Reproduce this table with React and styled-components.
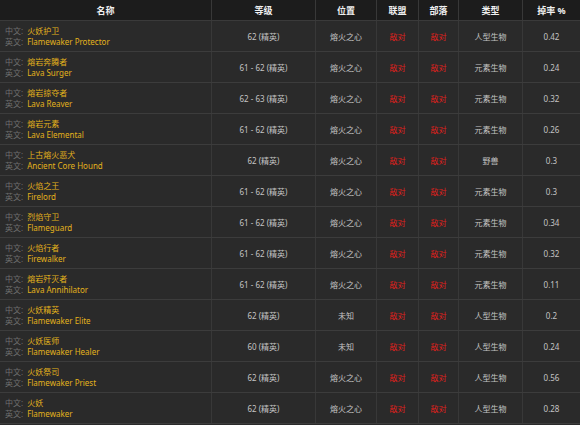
import React from 'react'
import styled, { createGlobalStyle } from 'styled-components'

const rows = [
  ['火妖护卫', 'Flamewaker Protector', '62 (精英)', '熔火之心', '人型生物', '0.42'],
  ['熔岩奔腾者', 'Lava Surger', '61 - 62 (精英)', '熔火之心', '元素生物', '0.24'],
  ['熔岩掠夺者', 'Lava Reaver', '62 - 63 (精英)', '熔火之心', '元素生物', '0.32'],
  ['熔岩元素', 'Lava Elemental', '61 - 62 (精英)', '熔火之心', '元素生物', '0.26'],
  ['上古熔火恶犬', 'Ancient Core Hound', '62 (精英)', '熔火之心', '野兽', '0.3'],
  ['火焰之王', 'Firelord', '61 - 62 (精英)', '熔火之心', '元素生物', '0.3'],
  ['烈焰守卫', 'Flameguard', '61 - 62 (精英)', '熔火之心', '元素生物', '0.34'],
  ['火焰行者', 'Firewalker', '61 - 62 (精英)', '熔火之心', '元素生物', '0.32'],
  ['熔岩歼灭者', 'Lava Annihilator', '61 - 62 (精英)', '熔火之心', '元素生物', '0.11'],
  ['火妖精英', 'Flamewaker Elite', '62 (精英)', '未知', '人型生物', '0.2'],
  ['火妖医师', 'Flamewaker Healer', '60 (精英)', '未知', '人型生物', '0.24'],
  ['火妖祭司', 'Flamewaker Priest', '62 (精英)', '熔火之心', '人型生物', '0.56'],
  ['火妖', 'Flamewaker', '62 (精英)', '熔火之心', '人型生物', '0.28'],
]

const App = () => {
  return (
    <>
      <Global />
      <Table>
        <HeadRow>
          <HeadCell>名称</HeadCell>
          <HeadCell>等级</HeadCell>
          <HeadCell>位置</HeadCell>
          <HeadCell>联盟</HeadCell>
          <HeadCell>部落</HeadCell>
          <HeadCell>类型</HeadCell>
          <HeadCell>掉率 %</HeadCell>
        </HeadRow>
        {rows.map(([cn, en, level, place, type, rate]) => (
          <Row key={en}>
            <NameCell>
              <Line><Label>中文:</Label><Name>{cn}</Name></Line>
              <Line><Label>英文:</Label><Name>{en}</Name></Line>
            </NameCell>
            <Cell>{level}</Cell>
            <Cell>{place}</Cell>
            <Cell $hostile>敌对</Cell>
            <Cell $hostile>敌对</Cell>
            <Cell>{type}</Cell>
            <Cell>{rate}</Cell>
          </Row>
        ))}
      </Table>
    </>
  )
}

export default App

const Global = createGlobalStyle`
  body {
    margin: 0;
    background: #2a2a2a;
    font-family: "Noto Sans", "Noto Sans CJK SC", sans-serif;
  }
`

const cols = '212px 104px 61px 42px 40px 64px 57px'

const Table = styled.div`
  width: 580px;
  height: 425px;
  overflow: hidden;
  background: #2a2a2a;
`

const HeadRow = styled.div`
  display: grid;
  grid-template-columns: ${cols};
  height: 21px;
  background: #1c1c1c;
  border-bottom: 1px solid #3a3a3a;
  box-sizing: border-box;
`

const HeadCell = styled.div`
  display: flex;
  align-items: center;
  justify-content: center;
  color: #f0f0f0;
  font-size: 9px;
  font-weight: bold;
  border-right: 1px solid #383838;

  &:last-child {
    border-right: none;
  }
`

const Row = styled.div`
  display: grid;
  grid-template-columns: ${cols};
  height: 31px;
  border-bottom: 1px solid #3c3c3c;
  box-sizing: border-box;
`

const Cell = styled.div`
  display: flex;
  align-items: center;
  justify-content: center;
  font-size: 8px;
  color: ${(p) => (p.$hostile ? '#e0201c' : '#c4c4c4')};
  border-right: 1px solid #383838;
  white-space: nowrap;

  &:last-child {
    border-right: none;
  }
`

const NameCell = styled.div`
  display: flex;
  flex-direction: column;
  justify-content: center;
  padding-left: 5px;
  border-right: 1px solid #383838;
`

const Line = styled.div`
  display: flex;
  align-items: center;
  height: 11.5px;
  font-size: 8px;
  white-space: nowrap;
`

const Label = styled.span`
  color: #6f6f6f;
  margin-right: 4px;
`

const Name = styled.span`
  color: #e3b21c;
`
